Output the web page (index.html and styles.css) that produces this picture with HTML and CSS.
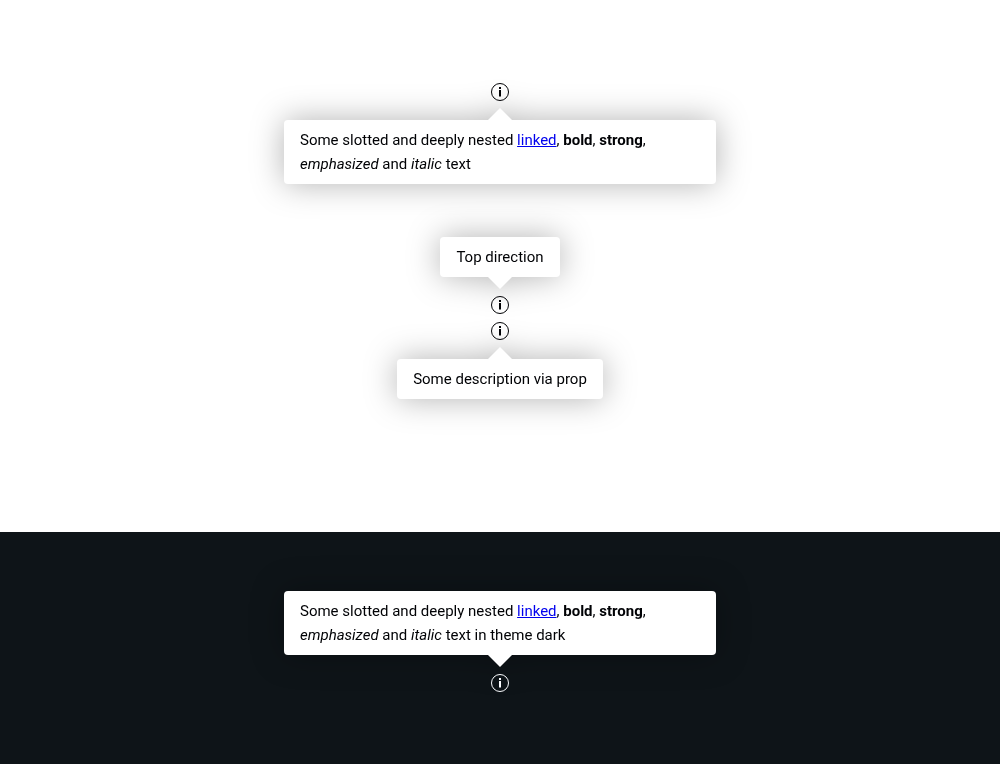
FILE: index.html
```html
<!DOCTYPE html>
<html lang="en">
<head>
<meta charset="utf-8">
<title>Popover</title>
<link rel="stylesheet" href="styles.css">
</head>
<body>
<svg class="sprite" aria-hidden="true">
  <symbol id="info" viewBox="0 0 24 24">
    <circle cx="12" cy="12" r="8.5" fill="none" stroke="currentColor" stroke-width="1"/>
    <path d="M11 7h2v2h-2zM11 10h2v6.500h-2z" fill="currentColor"/>
  </symbol>
</svg>
<main class="page">
  <section class="panel light">
    <div class="popover bottom">
      <button class="trigger" type="button" aria-label="More information"><svg class="icon"><use href="#info"/></svg></button>
      <div class="bubble">Some slotted and deeply nested <a href="#">linked</a>, <b>bold</b>, <strong>strong</strong>, <em>emphasized</em> and <i>italic</i> text</div>
    </div>
    <div class="pair">
      <div class="popover top">
        <button class="trigger" type="button" aria-label="More information"><svg class="icon"><use href="#info"/></svg></button>
        <div class="bubble">Top direction</div>
      </div>
      <div class="popover bottom">
        <button class="trigger" type="button" aria-label="More information"><svg class="icon"><use href="#info"/></svg></button>
        <div class="bubble">Some description via prop</div>
      </div>
    </div>
  </section>
  <section class="panel dark">
    <div class="popover top">
      <button class="trigger" type="button" aria-label="More information"><svg class="icon"><use href="#info"/></svg></button>
      <div class="bubble">Some slotted and deeply nested <a href="#">linked</a>, <b>bold</b>, <strong>strong</strong>, <em>emphasized</em> and <i>italic</i> text in theme dark</div>
    </div>
  </section>
</main>
</body>
</html>
```
FILE: styles.css
```css
* {
  box-sizing: border-box;
}

body {
  margin: 0;
  background: #fff;
  color: #010205;
  font: 15px/24px Roboto, "Liberation Sans", sans-serif;
}

.sprite {
  position: absolute;
  width: 0;
  height: 0;
}

.page {
  display: flex;
  flex-direction: column;
  min-height: 100vh;
}

.panel {
  display: flex;
  flex-direction: column;
  align-items: center;
}

.light {
  gap: 53px;
  padding: 80px 16px 133px;
}

.dark {
  flex: 1;
  padding: 59px 16px 69px;
  background: #0e1418;
}

.pair {
  display: flex;
  flex-direction: column;
  align-items: center;
  gap: 2px;
}

.popover {
  display: flex;
  flex-direction: column;
  align-items: center;
  gap: 16px;
}

.popover.top {
  flex-direction: column-reverse;
}

.trigger {
  z-index: 1;
  display: block;
  width: 24px;
  height: 24px;
  padding: 0;
  border: 0;
  background: none;
  color: #010205;
  cursor: pointer;
}

.dark .trigger {
  color: #fbfcff;
}

.icon {
  display: block;
  width: 24px;
  height: 24px;
}

.bubble {
  position: relative;
  max-width: 432px;
  padding: 8px 16px;
  border-radius: 4px;
  background: #fff;
  filter: drop-shadow(0 0 16px rgba(0, 0, 0, 0.3));
}

.bubble::before {
  content: "";
  position: absolute;
  left: 50%;
  margin-left: -12px;
  border: 0 solid transparent;
  border-width: 0 12px;
}

.bottom .bubble::before {
  bottom: 100%;
  border-bottom: 12px solid #fff;
}

.top .bubble::before {
  top: 100%;
  border-top: 12px solid #fff;
}

.bubble a {
  color: #0000ee;
}
```
